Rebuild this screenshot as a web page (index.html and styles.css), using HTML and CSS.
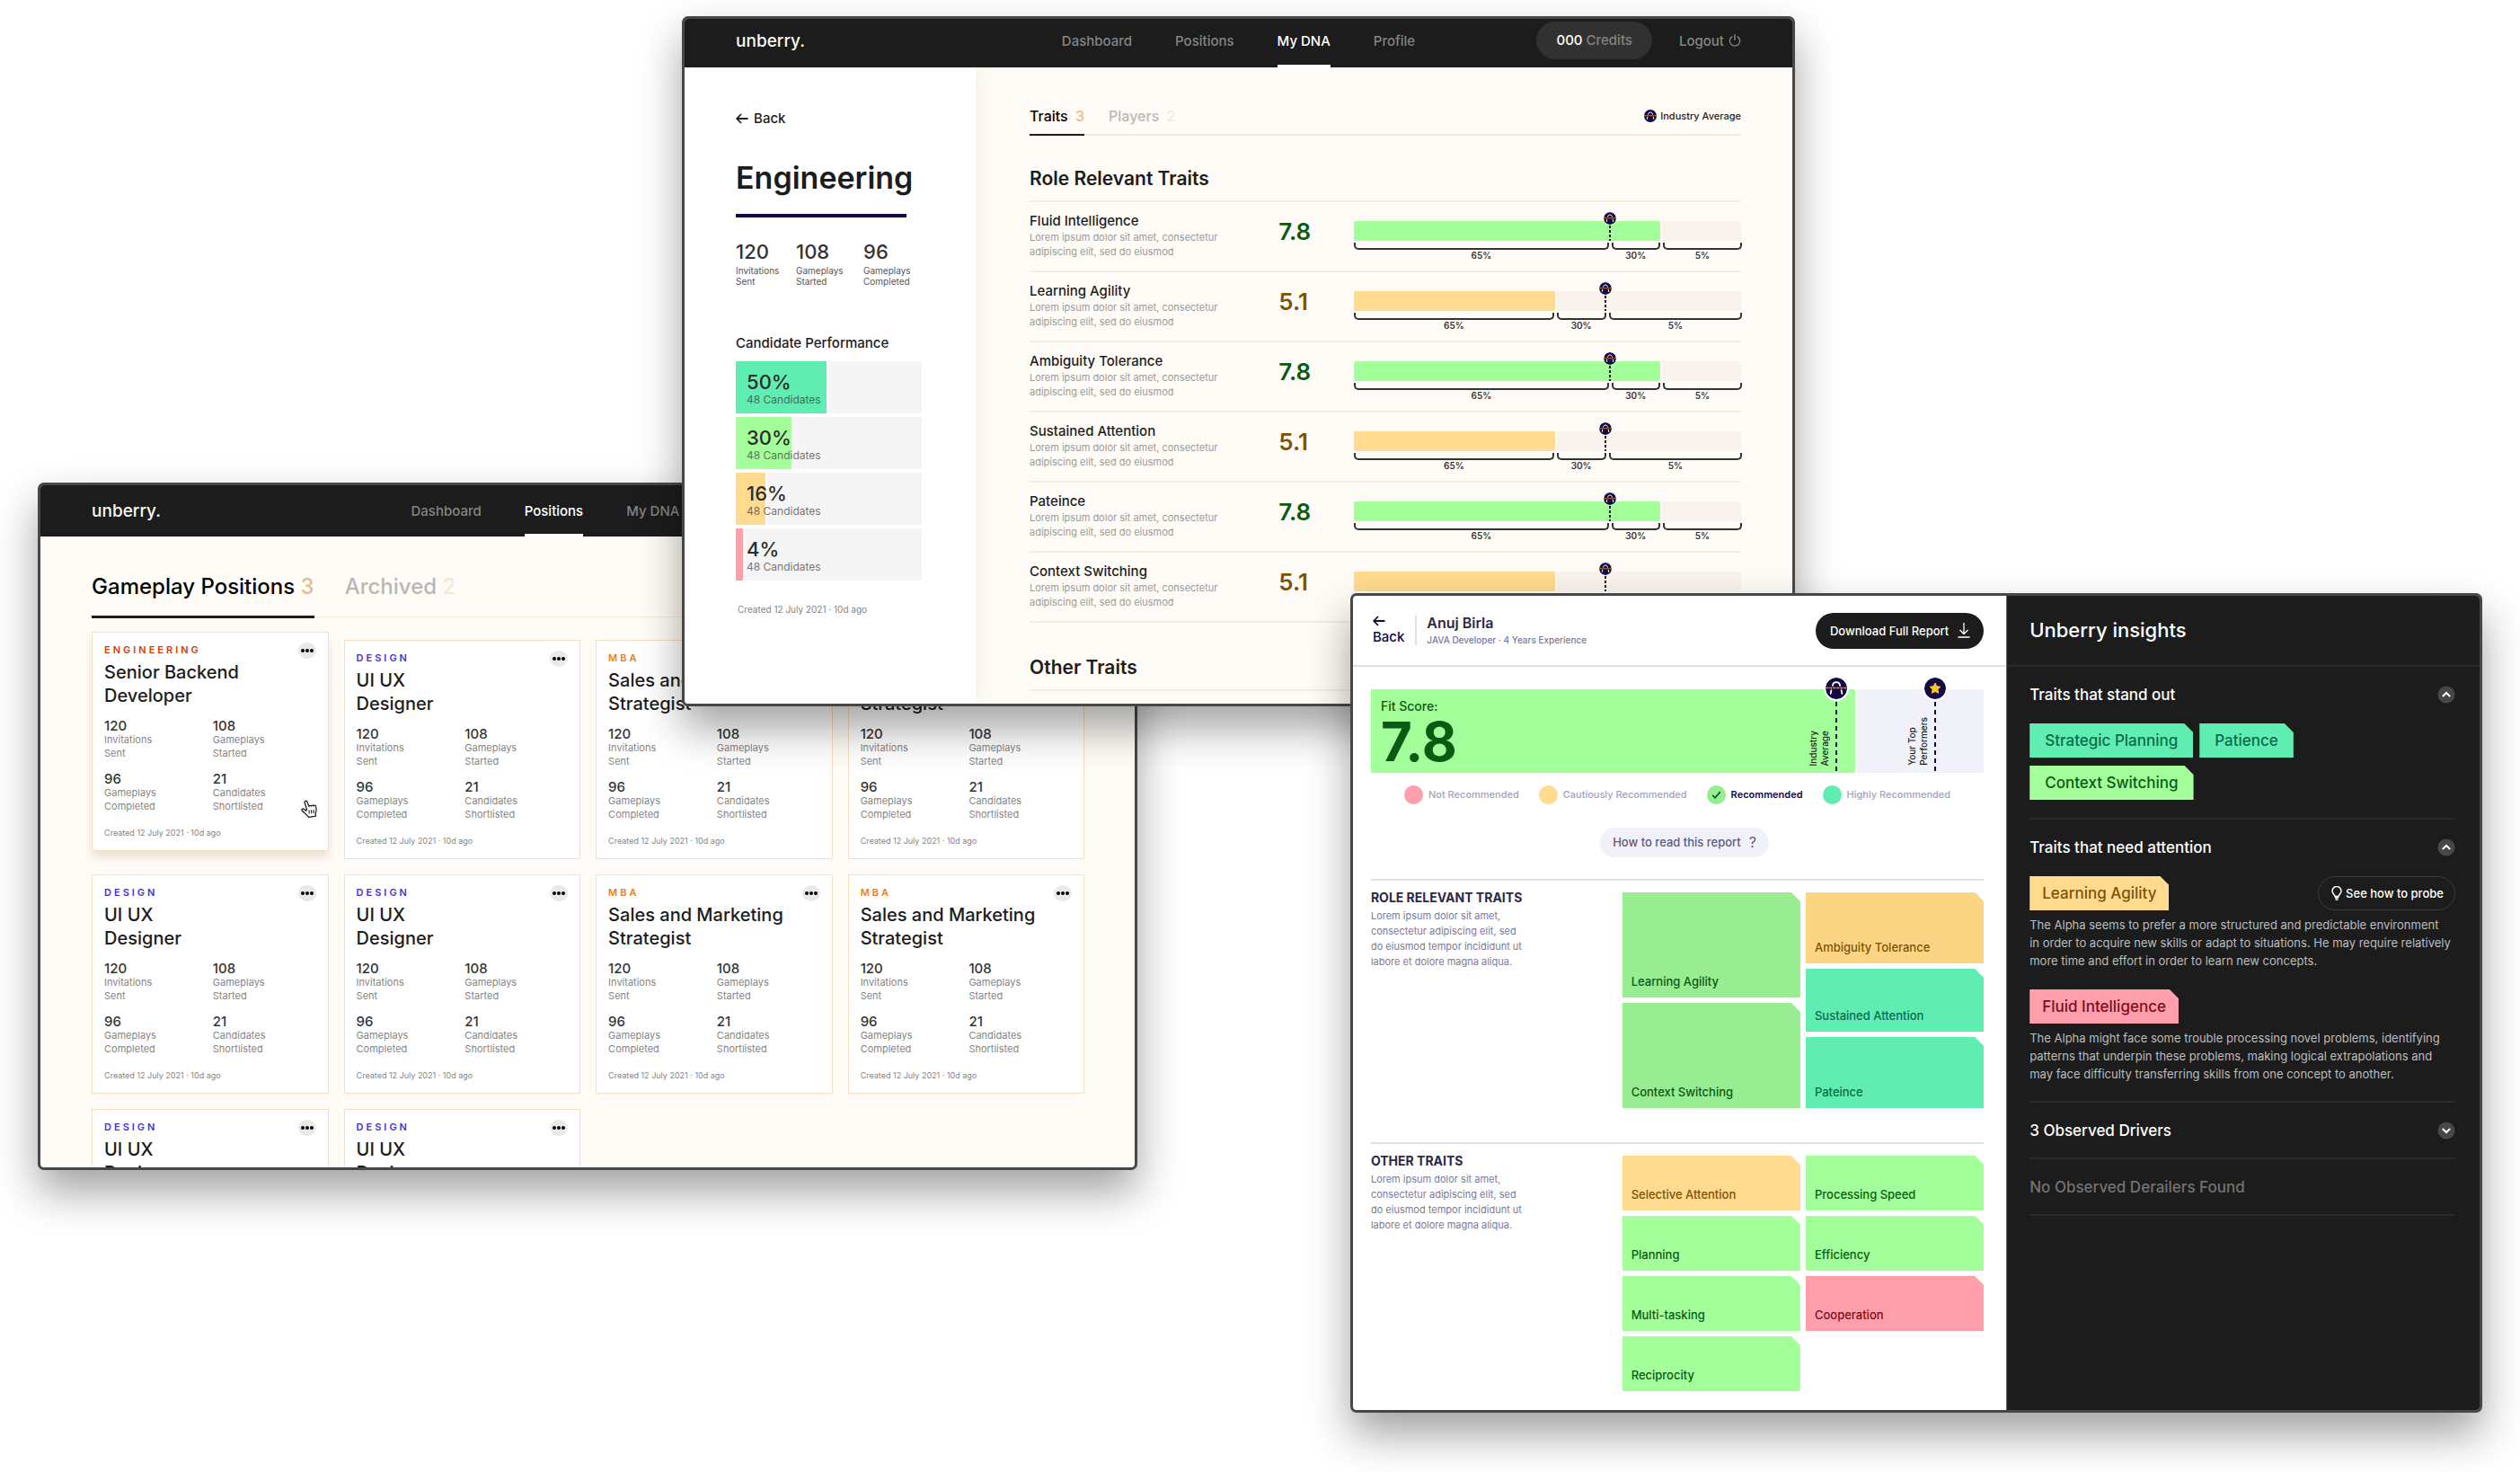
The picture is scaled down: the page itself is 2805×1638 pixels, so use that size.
FILE: index.html
```html
<!DOCTYPE html>
<html lang="en">
<head>
<meta charset="utf-8">
<title>unberry.</title>
<link rel="stylesheet" href="styles.css">
</head>
<body>
<svg class="sprite" aria-hidden="true">
  <symbol id="i-avg" viewBox="0 0 24 24">
    <circle cx="12" cy="12" r="12" fill="#150a45"/>
    <path d="M7.800 9C8.300 6.300 9.600 5.200 12 5.200s3.700 1.100 4.200 3.800M6.400 14l-.8 4M17.600 14l.8 4" fill="none" stroke="#fff" stroke-width="1.700" stroke-linecap="round"/>
    <path d="M.2 11.500h23.600" stroke="#f7931e" stroke-width="1.600" stroke-dasharray="3.200 .8"/>
  </symbol>
  <symbol id="i-star" viewBox="0 0 24 24">
    <circle cx="12" cy="12" r="12" fill="#150a45"/>
    <path d="M12 6l1.800 3.700 4.100.6-3 2.900.7 4.100-3.600-1.900-3.600 1.900.7-4.100-3-2.900 4.100-.6z" fill="#ffc526" stroke="#ffc526" stroke-width="1" stroke-linejoin="round"/>
  </symbol>
  <symbol id="i-back" viewBox="0 0 14 12">
    <path d="M13.500 6H1.200M6 1L1.200 6 6 11" fill="none" stroke="currentColor" stroke-width="1.800"/>
  </symbol>
  <symbol id="i-power" viewBox="0 0 14 14">
    <path d="M4.300 2.600a5.600 5.600 0 1 0 5.400 0M7 0v7" fill="none" stroke="currentColor" stroke-width="1.400"/>
  </symbol>
  <symbol id="i-more" viewBox="0 0 20 18">
    <circle cx="5" cy="9" r="2"/><circle cx="10" cy="9" r="2"/><circle cx="15" cy="9" r="2"/>
  </symbol>
  <symbol id="i-chevron" viewBox="0 0 20 20">
    <circle cx="10" cy="10" r="9.500" fill="#474747"/>
    <path d="M5.800 12L10 8l4.200 4" fill="none" stroke="#fff" stroke-width="2"/>
  </symbol>
  <symbol id="i-check" viewBox="0 0 22 22">
    <path d="M6.500 11.500l3 3 6-7" fill="none" stroke="#0b5a14" stroke-width="1.800"/>
  </symbol>
</svg>

<main class="desktop">

  <!-- Positions -->
  <section class="window window--positions" aria-label="Positions">
    <header class="topbar topbar--tall">
      <a class="logo" href="#">unberry.</a>
      <nav class="menu">
        <a href="#">Dashboard</a>
        <a class="is-active" href="#">Positions</a>
        <a href="#">My DNA</a>
        <a href="#">Profile</a>
      </nav>
    </header>
    <div class="positions">
      <div class="tabs tabs--large">
        <a class="tab is-active" href="#">Gameplay Positions <span>3</span></a>
        <a class="tab" href="#">Archived <span>2</span></a>
      </div>
      <div class="cards">
        <article class="card card--hover">
          <div class="card-head"><span class="cat cat--eng">ENGINEERING</span><button class="more" aria-label="More"><svg><use href="#i-more"/></svg></button></div>
          <h3>Senior Backend<br>Developer</h3>
          <dl class="stats"><div><dt>120</dt><dd>Invitations<br>Sent</dd></div><div><dt>108</dt><dd>Gameplays<br>Started</dd></div><div><dt>96</dt><dd>Gameplays<br>Completed</dd></div><div><dt>21</dt><dd>Candidates<br>Shortlisted</dd></div></dl>
          <p class="created">Created 12 July 2021 · 10d ago</p>
          <svg class="cursor" viewBox="0 0 18 20"><path d="M6.500 11L4.200 3.200a1.400 1.400 0 0 1 2.700-.9L9 7.500a1.300 1.300 0 0 1 2.500-.4 1.300 1.300 0 0 1 2.500-.1 1.300 1.300 0 0 1 2.500.4c.9 3 1 5-.3 7.500l.3 3.300-8 1.200C7 16.500 3.500 14.500 1.200 12c-.8-1.400.6-2.500 2-1.700l2.300 1.900z" fill="#fff" stroke="#222" stroke-width="1.300" stroke-linejoin="round"/><path d="M9 11.500l.3 4M11.500 11.300l.3 4M14 11l.2 4" stroke="#222" stroke-width="1.100"/></svg>
        </article>
        <article class="card">
          <div class="card-head"><span class="cat cat--design">DESIGN</span><button class="more" aria-label="More"><svg><use href="#i-more"/></svg></button></div>
          <h3>UI UX<br>Designer</h3>
          <dl class="stats"><div><dt>120</dt><dd>Invitations<br>Sent</dd></div><div><dt>108</dt><dd>Gameplays<br>Started</dd></div><div><dt>96</dt><dd>Gameplays<br>Completed</dd></div><div><dt>21</dt><dd>Candidates<br>Shortlisted</dd></div></dl>
          <p class="created">Created 12 July 2021 · 10d ago</p>
        </article>
        <article class="card">
          <div class="card-head"><span class="cat cat--mba">MBA</span><button class="more" aria-label="More"><svg><use href="#i-more"/></svg></button></div>
          <h3>Sales and Marketing<br>Strategist</h3>
          <dl class="stats"><div><dt>120</dt><dd>Invitations<br>Sent</dd></div><div><dt>108</dt><dd>Gameplays<br>Started</dd></div><div><dt>96</dt><dd>Gameplays<br>Completed</dd></div><div><dt>21</dt><dd>Candidates<br>Shortlisted</dd></div></dl>
          <p class="created">Created 12 July 2021 · 10d ago</p>
        </article>
        <article class="card">
          <div class="card-head"><span class="cat cat--mba">MBA</span><button class="more" aria-label="More"><svg><use href="#i-more"/></svg></button></div>
          <h3>Sales and Marketing<br>Strategist</h3>
          <dl class="stats"><div><dt>120</dt><dd>Invitations<br>Sent</dd></div><div><dt>108</dt><dd>Gameplays<br>Started</dd></div><div><dt>96</dt><dd>Gameplays<br>Completed</dd></div><div><dt>21</dt><dd>Candidates<br>Shortlisted</dd></div></dl>
          <p class="created">Created 12 July 2021 · 10d ago</p>
        </article>
        <article class="card">
          <div class="card-head"><span class="cat cat--design">DESIGN</span><button class="more" aria-label="More"><svg><use href="#i-more"/></svg></button></div>
          <h3>UI UX<br>Designer</h3>
          <dl class="stats"><div><dt>120</dt><dd>Invitations<br>Sent</dd></div><div><dt>108</dt><dd>Gameplays<br>Started</dd></div><div><dt>96</dt><dd>Gameplays<br>Completed</dd></div><div><dt>21</dt><dd>Candidates<br>Shortlisted</dd></div></dl>
          <p class="created">Created 12 July 2021 · 10d ago</p>
        </article>
        <article class="card">
          <div class="card-head"><span class="cat cat--design">DESIGN</span><button class="more" aria-label="More"><svg><use href="#i-more"/></svg></button></div>
          <h3>UI UX<br>Designer</h3>
          <dl class="stats"><div><dt>120</dt><dd>Invitations<br>Sent</dd></div><div><dt>108</dt><dd>Gameplays<br>Started</dd></div><div><dt>96</dt><dd>Gameplays<br>Completed</dd></div><div><dt>21</dt><dd>Candidates<br>Shortlisted</dd></div></dl>
          <p class="created">Created 12 July 2021 · 10d ago</p>
        </article>
        <article class="card">
          <div class="card-head"><span class="cat cat--mba">MBA</span><button class="more" aria-label="More"><svg><use href="#i-more"/></svg></button></div>
          <h3>Sales and Marketing<br>Strategist</h3>
          <dl class="stats"><div><dt>120</dt><dd>Invitations<br>Sent</dd></div><div><dt>108</dt><dd>Gameplays<br>Started</dd></div><div><dt>96</dt><dd>Gameplays<br>Completed</dd></div><div><dt>21</dt><dd>Candidates<br>Shortlisted</dd></div></dl>
          <p class="created">Created 12 July 2021 · 10d ago</p>
        </article>
        <article class="card">
          <div class="card-head"><span class="cat cat--mba">MBA</span><button class="more" aria-label="More"><svg><use href="#i-more"/></svg></button></div>
          <h3>Sales and Marketing<br>Strategist</h3>
          <dl class="stats"><div><dt>120</dt><dd>Invitations<br>Sent</dd></div><div><dt>108</dt><dd>Gameplays<br>Started</dd></div><div><dt>96</dt><dd>Gameplays<br>Completed</dd></div><div><dt>21</dt><dd>Candidates<br>Shortlisted</dd></div></dl>
          <p class="created">Created 12 July 2021 · 10d ago</p>
        </article>
        <article class="card">
          <div class="card-head"><span class="cat cat--design">DESIGN</span><button class="more" aria-label="More"><svg><use href="#i-more"/></svg></button></div>
          <h3>UI UX<br>Designer</h3>
        </article>
        <article class="card">
          <div class="card-head"><span class="cat cat--design">DESIGN</span><button class="more" aria-label="More"><svg><use href="#i-more"/></svg></button></div>
          <h3>UI UX<br>Designer</h3>
        </article>
      </div>
    </div>
  </section>

  <!-- My DNA -->
  <section class="window window--dna" aria-label="My DNA">
    <header class="topbar">
      <a class="logo" href="#">unberry.</a>
      <nav class="menu">
        <a href="#">Dashboard</a>
        <a href="#">Positions</a>
        <a class="is-active" href="#">My DNA</a>
        <a href="#">Profile</a>
      </nav>
      <div class="account">
        <span class="credits"><b>000</b> Credits</span>
        <a class="logout" href="#">Logout <svg><use href="#i-power"/></svg></a>
      </div>
    </header>
    <div class="dna">
      <aside class="side">
        <a class="back" href="#"><svg><use href="#i-back"/></svg>Back</a>
        <h1>Engineering</h1>
        <dl class="totals">
          <div><dt>120</dt><dd>Invitations<br>Sent</dd></div>
          <div><dt>108</dt><dd>Gameplays<br>Started</dd></div>
          <div><dt>96</dt><dd>Gameplays<br>Completed</dd></div>
        </dl>
        <h4>Candidate Performance</h4>
        <ul class="perf">
          <li><i class="fill teal" style="width:49%"></i><b>50%</b><span>48 Candidates</span></li>
          <li><i class="fill green" style="width:30%"></i><b>30%</b><span>48 Candidates</span></li>
          <li><i class="fill amber" style="width:16%"></i><b>16%</b><span>48 Candidates</span></li>
          <li><i class="fill pink" style="width:4%"></i><b>4%</b><span>48 Candidates</span></li>
        </ul>
        <p class="side-created">Created 12 July 2021 · 10d ago</p>
      </aside>
      <div class="traits">
        <div class="tabs">
          <a class="tab is-active" href="#">Traits <span>3</span></a>
          <a class="tab" href="#">Players <span>2</span></a>
          <span class="key"><svg><use href="#i-avg"/></svg>Industry Average</span>
        </div>
        <h2>Role Relevant Traits</h2>
        <div class="trait high">
          <div><h5>Fluid Intelligence</h5><p>Lorem ipsum dolor sit amet, consectetur<br>adipiscing elit, sed do eiusmod</p></div>
          <strong>7.8</strong>
          <div class="meter"><div class="bar"><i></i><span class="pin"><svg><use href="#i-avg"/></svg></span></div><div class="split"><span>65%</span><span>30%</span><span>5%</span></div></div>
        </div>
        <div class="trait low">
          <div><h5>Learning Agility</h5><p>Lorem ipsum dolor sit amet, consectetur<br>adipiscing elit, sed do eiusmod</p></div>
          <strong>5.1</strong>
          <div class="meter"><div class="bar"><i></i><span class="pin"><svg><use href="#i-avg"/></svg></span></div><div class="split"><span>65%</span><span>30%</span><span>5%</span></div></div>
        </div>
        <div class="trait high">
          <div><h5>Ambiguity Tolerance</h5><p>Lorem ipsum dolor sit amet, consectetur<br>adipiscing elit, sed do eiusmod</p></div>
          <strong>7.8</strong>
          <div class="meter"><div class="bar"><i></i><span class="pin"><svg><use href="#i-avg"/></svg></span></div><div class="split"><span>65%</span><span>30%</span><span>5%</span></div></div>
        </div>
        <div class="trait low">
          <div><h5>Sustained Attention</h5><p>Lorem ipsum dolor sit amet, consectetur<br>adipiscing elit, sed do eiusmod</p></div>
          <strong>5.1</strong>
          <div class="meter"><div class="bar"><i></i><span class="pin"><svg><use href="#i-avg"/></svg></span></div><div class="split"><span>65%</span><span>30%</span><span>5%</span></div></div>
        </div>
        <div class="trait high">
          <div><h5>Pateince</h5><p>Lorem ipsum dolor sit amet, consectetur<br>adipiscing elit, sed do eiusmod</p></div>
          <strong>7.8</strong>
          <div class="meter"><div class="bar"><i></i><span class="pin"><svg><use href="#i-avg"/></svg></span></div><div class="split"><span>65%</span><span>30%</span><span>5%</span></div></div>
        </div>
        <div class="trait low">
          <div><h5>Context Switching</h5><p>Lorem ipsum dolor sit amet, consectetur<br>adipiscing elit, sed do eiusmod</p></div>
          <strong>5.1</strong>
          <div class="meter"><div class="bar"><i></i><span class="pin"><svg><use href="#i-avg"/></svg></span></div></div>
        </div>
        <h2>Other Traits</h2>
        <div class="trait"><div><h5>Fluid Intelligence</h5></div></div>
      </div>
    </div>
  </section>

  <!-- Candidate report -->
  <section class="window window--report" aria-label="Candidate report">
    <div class="report">
      <header class="report-head">
        <a class="back back--stacked" href="#"><svg><use href="#i-back"/></svg>Back</a>
        <div class="person"><h4>Anuj Birla</h4><p>JAVA Developer · 4 Years Experience</p></div>
        <button class="download">Download Full Report <svg viewBox="0 0 14 17"><path d="M7 0v12M2.500 8L7 12.500 11.500 8M.5 16h13" fill="none" stroke="#fff" stroke-width="1.300"/></svg></button>
      </header>
      <div class="report-body">
        <div class="fit">
          <div class="fit-score"><span>Fit Score:</span><strong>7.8</strong></div>
          <span class="flag flag--avg"><svg><use href="#i-avg"/></svg><em>Industry<br>Average</em></span>
          <span class="flag flag--top"><svg><use href="#i-star"/></svg><em>Your Top<br>Performers</em></span>
        </div>
        <ul class="legend">
          <li><i class="dot pink"></i>Not Recommended</li>
          <li><i class="dot amber"></i>Cautiously Recommended</li>
          <li class="is-on"><i class="dot green-soft"><svg><use href="#i-check"/></svg></i>Recommended</li>
          <li><i class="dot teal"></i>Highly Recommended</li>
        </ul>
        <div class="help"><button class="howto">How to read this report <span>?</span></button></div>
        <section class="group">
          <div class="group-text"><h6>ROLE RELEVANT TRAITS</h6><p>Lorem ipsum dolor sit amet,<br>consectetur adipiscing elit, sed<br>do eiusmod tempor incididunt ut<br>labore et dolore magna aliqua.</p></div>
          <div class="tiles">
            <div class="stack"><div class="tile green-soft grow-3">Learning Agility</div><div class="tile green-soft grow-3">Context Switching</div></div>
            <div class="stack"><div class="tile amber-deep grow-2">Ambiguity Tolerance</div><div class="tile teal grow-1">Sustained Attention</div><div class="tile teal grow-2">Pateince</div></div>
          </div>
        </section>
        <section class="group">
          <div class="group-text"><h6>OTHER TRAITS</h6><p>Lorem ipsum dolor sit amet,<br>consectetur adipiscing elit, sed<br>do eiusmod tempor incididunt ut<br>labore et dolore magna aliqua.</p></div>
          <div class="tiles">
            <div class="stack"><div class="tile amber">Selective Attention</div><div class="tile green">Planning</div><div class="tile green">Multi-tasking</div><div class="tile green">Reciprocity</div></div>
            <div class="stack"><div class="tile green">Processing Speed</div><div class="tile green">Efficiency</div><div class="tile pink">Cooperation</div></div>
          </div>
        </section>
      </div>
    </div>
    <aside class="insights">
      <h2>Unberry insights</h2>
      <section>
        <h3>Traits that stand out<button class="toggle" aria-label="Collapse"><svg><use href="#i-chevron"/></svg></button></h3>
        <div class="chips"><span class="chip teal">Strategic Planning</span><span class="chip teal">Patience</span><span class="chip green">Context Switching</span></div>
      </section>
      <section>
        <h3>Traits that need attention<button class="toggle" aria-label="Collapse"><svg><use href="#i-chevron"/></svg></button></h3>
        <div class="chip-row"><span class="chip amber">Learning Agility</span><button class="probe"><svg viewBox="0 0 12 16"><path d="M4 11.500C4 9.500 1 8.500 1 5.500a5 5 0 0 1 10 0c0 3-3 4-3 6zM4 13h4M4.500 15h3" fill="none" stroke="#fff" stroke-width="1.500"/></svg>See how to probe</button></div>
        <p>The Alpha seems to prefer a more structured and predictable environment<br>in order to acquire new skills or adapt to situations. He may require relatively<br>more time and effort in order to learn new concepts.</p>
        <div class="chip-row"><span class="chip pink">Fluid Intelligence</span></div>
        <p>The Alpha might face some trouble processing novel problems, identifying<br>patterns that underpin these problems, making logical extrapolations and<br>may face difficulty transferring skills from one concept to another.</p>
      </section>
      <section>
        <h3>3 Observed Drivers<button class="toggle toggle--down" aria-label="Expand"><svg><use href="#i-chevron"/></svg></button></h3>
      </section>
      <section>
        <h3 class="muted">No Observed Derailers Found</h3>
      </section>
    </aside>
  </section>
</main>
</body>
</html>
```
FILE: styles.css
```css
* { box-sizing: border-box; margin: 0; padding: 0; }
body { font-family: Inter, "Liberation Sans", sans-serif; font-weight: 400; color: #1c1c1c; background: #fff; }
a { color: inherit; text-decoration: none; }
button { font: inherit; border: 0; background: none; cursor: pointer; }
ul { list-style: none; }
h1, h2, h3, h4, h5 { font-weight: 500; }
svg { display: block; flex: none; }
.sprite { display: none; }

/* Windows on the canvas */
.desktop { position: relative; min-height: 100vh; overflow: hidden; }
.window { position: absolute; isolation: isolate; border: 3px solid #474747; border-radius: 7px; overflow: hidden; background: #fffcf7; box-shadow: 0 24px 48px rgba(0, 0, 0, .37); }
.window--positions { left: 1.5%; top: 32.8%; width: 43.64%; height: 46.7vh; }
.window--dna { left: 27.06%; top: 1.1%; width: 44.17%; height: 46.9vh; display: flex; flex-direction: column; }
.window--report { left: 53.58%; top: 40.3%; width: 44.92%; display: grid; grid-template-columns: 58fr 42fr; background: #fff; }

/* Trait colours */
.teal { background: #60edb2; color: #0b6b4b; }
.green { background: #a2ff99; color: #0b5a14; }
.green-soft { background: #98ec91; color: #0b5a14; }
.amber { background: #ffda8f; color: #7d5206; }
.amber-deep { background: #fcd584; color: #7d5206; }
.pink { background: #ff9fab; color: #7d0b1c; }

/* Top bar */
.topbar { position: relative; z-index: 2; display: grid; grid-template-columns: 1fr auto 1fr; align-items: center; height: 54px; padding: 0 57px; background: #1c1c1c; color: #848484; font-size: 15px; font-weight: 500; flex: none; }
.topbar--tall { height: 57px; }
.logo { padding-bottom: 6px; color: #fdf9f0; font-size: 19px; }
.menu { display: flex; gap: 48px; height: 100%; }
.menu a { display: flex; align-items: center; height: 100%; border-top: 3px solid transparent; border-bottom: 3px solid transparent; padding-bottom: 6px; }
.topbar--tall .menu a, .topbar--tall .logo { padding-bottom: 0; }
.menu .is-active { color: #fff; border-bottom-color: #fff; }
.account { display: flex; justify-content: flex-end; align-items: center; gap: 30px; padding-bottom: 6px; }
.credits { padding: 0 22px; border-radius: 21px; line-height: 42px; background: #313131; }
.credits b { color: #fff; font-weight: 500; }
.logout { display: flex; align-items: center; gap: 5px; }
.logout svg { width: 14px; height: 14px; }

/* Tabs */
.tabs { display: flex; gap: 27px; border-bottom: 2px solid #f6ecdc; font-size: 16px; line-height: 20px; font-weight: 500; }
.tab { padding-bottom: 10px; border-bottom: 2px solid transparent; margin-bottom: -2px; color: #b9b7b3; }
.tab span { color: #f6e8d6; margin-left: 4px; }
.tab.is-active { color: #000; border-color: #1c1c1c; }
.tab.is-active span { color: #e3bd92; }
.tabs--large { gap: 34px; border-bottom-width: 1px; font-size: 24px; line-height: 32px; }
.tabs--large .tab { padding-bottom: 16px; border-bottom-width: 3px; }
.tabs--large .tab span { margin-left: 0; }
.key { display: flex; align-items: center; gap: 4px; margin-left: auto; padding-bottom: 10px; font-size: 11px; color: #1c1c1c; }
.key svg { width: 14px; height: 14px; }

/* Position cards */
.positions { padding: 40px 56px 0 57px; }
.cards { display: grid; grid-template-columns: repeat(4, 1fr); gap: 17px; margin-top: 25px; }
.card { position: relative; padding: 11px 13px 13px; border: 1px solid #f5dfc5; background: #fff; }
.card--hover { transform: translateY(-9px); box-shadow: 0 8px 10px rgba(190, 150, 110, .25); }
.card-head { display: flex; justify-content: space-between; height: 16px; }
.cat { font-size: 11px; line-height: 16px; font-weight: 600; letter-spacing: 3px; }
.cat--eng { color: #d63c0a; }
.cat--design { color: #4334d0; }
.cat--mba { color: #f07c13; }
.more { width: 20px; height: 18px; border-radius: 50%; background: #e9e9e9; }
.more svg { width: 20px; height: 18px; }
.card h3 { margin-top: 4px; font-size: 20px; line-height: 26px; font-weight: 500; }
.stats { display: grid; grid-template-columns: 1fr 1fr; gap: 12px 6px; margin-top: 12px; }
.stats dt { font-size: 15px; line-height: 17px; font-weight: 500; color: #333; }
.stats dd { font-size: 11px; line-height: 15px; color: #858585; }
.created { margin-top: 16px; font-size: 9px; line-height: 12px; color: #858585; }
.cursor { position: absolute; right: 12px; bottom: 36px; width: 18px; height: 20px; }

/* DNA side panel */
.dna { display: flex; flex: 1; min-height: 0; }
.side { position: relative; z-index: 1; flex: none; width: 324px; padding: 47px 60px 0 57px; background: #fff; box-shadow: 0 0 24px rgba(200, 160, 110, .2); }
.back { display: flex; align-items: center; gap: 6px; font-size: 15px; line-height: 20px; font-weight: 500; }
.back svg { width: 14px; height: 12px; }
.side h1 { width: 190px; margin-top: 34px; padding-bottom: 18px; border-bottom: 4px solid #150a45; font-size: 34px; line-height: 44px; font-weight: 600; white-space: nowrap; }
.totals { display: grid; grid-template-columns: 67px 75px 1fr; margin: 25px -10px 0 0; }
.totals dt { font-size: 22px; line-height: 26px; font-weight: 500; color: #333; }
.totals dd { margin-top: 2px; font-size: 10px; line-height: 12px; color: #555; }
.side h4 { margin: 53px 0 10px; font-size: 15px; line-height: 20px; }
.perf { display: grid; gap: 4px; }
.perf li { position: relative; height: 58px; padding: 10px 12px; background: #f5f5f5; }
.fill { position: absolute; left: 0; top: 0; bottom: 0; box-shadow: 2px 0 #fff; }
.perf b, .perf span { position: relative; display: block; }
.perf b { font-size: 22px; line-height: 26px; font-weight: 500; color: #2c2c2c; }
.perf span { font-size: 12px; line-height: 13px; color: #1c1c1c; opacity: .6; }
.side-created { margin: 24px 0 0 2px; font-size: 10px; line-height: 16px; color: #858585; white-space: nowrap; }

/* DNA traits */
.traits { flex: 1; padding: 44px 57px 0 60px; }
.traits h2 { margin-top: 34px; padding-bottom: 10px; border-bottom: 2px solid #f6ecdf; font-size: 21px; line-height: 28px; font-weight: 600; }
.traits .trait + h2 { margin-top: 36px; }
.trait { display: grid; grid-template-columns: 35% 84px 1fr; padding: 11px 0 13px; border-bottom: 2px solid #f6ecdf; }
.trait h5 { font-size: 15px; line-height: 20px; }
.trait p { font-size: 11px; line-height: 16px; color: #9c9a97; }
.trait strong { padding-top: 8px; font-size: 26px; line-height: 28px; font-weight: 600; }
.high strong { color: #0b5a14; }
.low strong { color: #7d5206; }
.meter { padding-top: 10px; }
.bar { position: relative; height: 22px; border-radius: 2px; background: #f9f2ed; }
.bar i { display: block; height: 100%; border-radius: 2px; box-shadow: 2px 0 #fffcf7; }
.high i { width: 79%; background: #a2ff99; }
.low i { width: 52%; background: #ffda8f; }
.pin { position: absolute; top: -10px; bottom: 0; width: 14px; margin-left: -7px; background: repeating-linear-gradient(#222 0 3px, transparent 3px 5px) center / 2px 100% no-repeat; }
.high .pin { left: 66%; }
.low .pin { left: 65%; }
.pin svg { width: 14px; height: 14px; border-radius: 50%; background: #fff; }
.split { display: grid; gap: 3px; margin: 2px -1px 0 0; height: 18px; }
.high .split { grid-template-columns: 283fr 54fr 88fr; }
.low .split { grid-template-columns: 222fr 55fr 148fr; }
.split span { font-size: 10px; line-height: 12px; font-weight: 600; text-align: center; color: #333; }
.split span::before { content: ""; display: block; height: 6px; border: solid #333; border-width: 0 2px 2px; border-radius: 0 0 5px 5px; }

/* Report */
.report { min-width: 0; }
.report-head { display: flex; align-items: center; height: 79px; padding: 0 25px 0 22px; border-bottom: 2px solid #dfdfec; }
.back--stacked { flex-direction: column; align-items: flex-start; gap: 3px; padding-right: 12px; border-right: 2px solid #dfdfec; color: #150a45; line-height: 18px; }
.person { margin-left: 11px; }
.person h4 { font-size: 16px; line-height: 20px; font-weight: 600; color: #2b2848; }
.person p { font-size: 10px; line-height: 18px; font-weight: 500; color: #7b7996; }
.download { display: flex; align-items: center; gap: 10px; height: 40px; margin-left: auto; padding: 0 15px 0 16px; border-radius: 20px; background: #1c1c1c; color: #fff; font-size: 13px; font-weight: 500; }
.download svg { width: 14px; height: 17px; }
.report-body { padding: 25px 25px 21px 20px; }
.fit { position: relative; height: 93px; border-radius: 2px; background: #f1f1fa; }
.fit-score { width: 79%; height: 100%; padding: 9px 11px 0; border-radius: 2px; background: #a2ff99; color: #0b5a14; box-shadow: 2px 0 #fff; }
.fit-score span { display: block; font-size: 14px; line-height: 20px; font-weight: 500; }
.fit-score strong { display: block; font-size: 60px; line-height: 58px; font-weight: 700; }
.flag { position: absolute; top: -15px; bottom: 0; width: 28px; margin-left: -14px; background: repeating-linear-gradient(#150a45 0 5px, transparent 5px 9px) center 2px / 2px 100% no-repeat; }
.flag--avg { left: 76%; }
.flag--top { left: 92%; }
.flag svg { width: 28px; height: 28px; border: 2px solid #fff; border-radius: 50%; background: #fff; }
.flag em { position: absolute; right: 20px; bottom: 8px; writing-mode: vertical-rl; transform: rotate(180deg); font-size: 10px; line-height: 13px; font-style: normal; font-weight: 500; white-space: nowrap; }
.legend { display: flex; justify-content: center; gap: 22px; margin-top: 14px; }
.legend li { display: flex; align-items: center; gap: 6px; font-size: 11px; line-height: 21px; font-weight: 500; color: #a3a1bd; }
.legend .is-on { color: #150a45; font-weight: 600; }
.dot { width: 21px; height: 21px; border-radius: 50%; }
.dot svg { width: 21px; height: 21px; }
.help { display: flex; justify-content: center; margin-top: 26px; padding-left: 16px; }
.howto { display: flex; gap: 9px; padding: 0 14px; border-radius: 17px; background: #f1f1fa; color: #5d5b80; font-size: 13px; line-height: 33px; font-weight: 500; }
.howto span { font-size: 16px; font-weight: 400; }
.group { display: grid; grid-template-columns: 41% 59%; margin-top: 38px; padding-top: 13px; border-top: 2px solid #dfdfec; }
.help + .group { margin-top: 24px; }
.group-text { margin-top: -4px; }
.group h6 { font-size: 14px; line-height: 20px; font-weight: 700; color: #2b2848; }
.group p { margin-top: 2px; font-size: 11px; line-height: 17px; color: #7b7996; }
.tiles { display: grid; grid-template-columns: 1fr 1fr; gap: 6px; }
.stack { display: flex; flex-direction: column; gap: 6px; }
.tile { display: flex; align-items: flex-end; height: 61px; padding: 0 10px 9px; font-size: 13px; line-height: 18px; font-weight: 500; clip-path: polygon(0 0, calc(100% - 10px) 0, 100% 10px, 100% 100%, 0 100%); }
.grow-3 { height: 117px; }
.grow-2 { height: 79px; }
.grow-1 { height: 70px; }

/* Insights */
.insights { padding: 0 27px 0 25px; background: #1c1c1c; color: #fff; border-left: 1px solid #666; }
.insights h2 { margin: 0 -27px 0 -25px; padding: 0 25px; height: 79px; border-bottom: 2px solid #2a2a2a; font-size: 22px; line-height: 77px; }
.insights section { padding: 21px 0 20px; border-bottom: 2px solid #2a2a2a; }
.insights h3 { display: flex; justify-content: space-between; align-items: center; font-size: 17px; line-height: 20px; font-weight: 500; }
.insights .muted { color: #737373; }
.toggle svg { width: 20px; height: 20px; }
.toggle--down { transform: rotate(180deg); }
.chips { display: flex; flex-wrap: wrap; gap: 9px 7px; margin-top: 22px; padding-right: 120px; }
.chip { padding: 0 17px; font-size: 17px; line-height: 38px; font-weight: 500; clip-path: polygon(0 0, calc(100% - 10px) 0, 100% 10px, 100% 100%, 0 100%); }
.chip-row { display: flex; justify-content: space-between; margin-top: 22px; }
.chip-row .chip { padding: 0 14px; }
.probe { display: flex; align-items: center; gap: 4px; height: 38px; padding: 0 12px 0 14px; border: 1px solid #3a3a3a; border-radius: 19px; color: #fff; font-size: 13px; font-weight: 500; }
.probe svg { width: 12px; height: 16px; }
.insights p { margin-top: 6px; font-size: 13px; line-height: 20px; color: #bdbdbd; white-space: nowrap; }
```
